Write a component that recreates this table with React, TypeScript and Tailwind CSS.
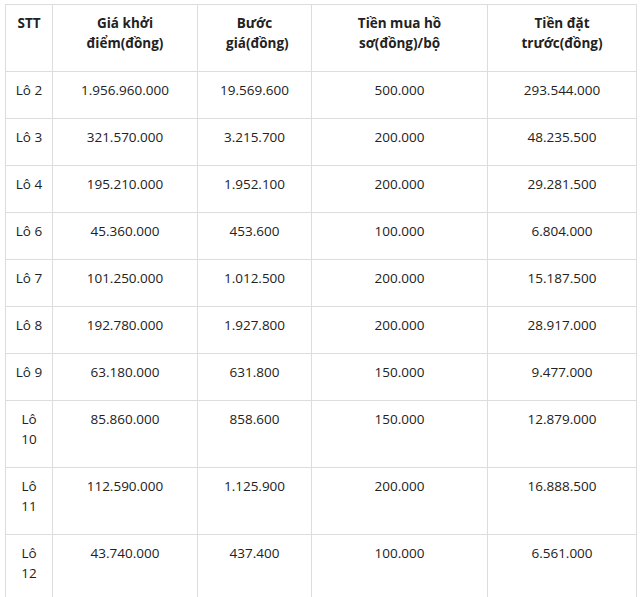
const HEAD = ['STT', 'Giá khởi điểm(đồng)', 'Bước giá(đồng)', 'Tiền mua hồ sơ(đồng)/bộ', 'Tiền đặt trước(đồng)']

const ROWS = [
  ['Lô 2', '1.956.960.000', '19.569.600', '500.000', '293.544.000'],
  ['Lô 3', '321.570.000', '3.215.700', '200.000', '48.235.500'],
  ['Lô 4', '195.210.000', '1.952.100', '200.000', '29.281.500'],
  ['Lô 6', '45.360.000', '453.600', '100.000', '6.804.000'],
  ['Lô 7', '101.250.000', '1.012.500', '200.000', '15.187.500'],
  ['Lô 8', '192.780.000', '1.927.800', '200.000', '28.917.000'],
  ['Lô 9', '63.180.000', '631.800', '150.000', '9.477.000'],
  ['Lô 10', '85.860.000', '858.600', '150.000', '12.879.000'],
  ['Lô 11', '112.590.000', '1.125.900', '200.000', '16.888.500'],
  ['Lô 12', '43.740.000', '437.400', '100.000', '6.561.000'],
]

const WIDTHS = ['w-[47px]', 'w-[145px]', 'w-[114px]', 'w-[176px]', 'w-[149px]']

export default function App() {
  return (
    <div className="bg-white min-h-screen pt-[4px] pl-[5px] font-['Open_Sans',sans-serif] text-[13.5px] leading-[20px] text-[#222]">
      <table className="table-fixed border-collapse w-[631px]">
        <colgroup>
          {WIDTHS.map((w, i) => <col key={i} className={w} />)}
        </colgroup>
        <thead>
          <tr>
            {HEAD.map((h, i) => (
              <th key={i} className={`border border-[#ddd] pt-[8px] pb-[18px] align-top text-center font-bold ${i === 0 ? 'px-[6px]' : 'px-[28px]'}`}>
                {h}
              </th>
            ))}
          </tr>
        </thead>
        <tbody>
          {ROWS.map((r, ri) => (
            <tr key={ri}>
              {r.map((c, ci) => (
                <td key={ci} className={`border border-[#ddd] pt-[8px] pb-[18px] align-top text-center ${ci === 0 ? 'px-[7px]' : 'px-[8px]'}`}>
                  {c}
                </td>
              ))}
            </tr>
          ))}
        </tbody>
      </table>
    </div>
  )
}
